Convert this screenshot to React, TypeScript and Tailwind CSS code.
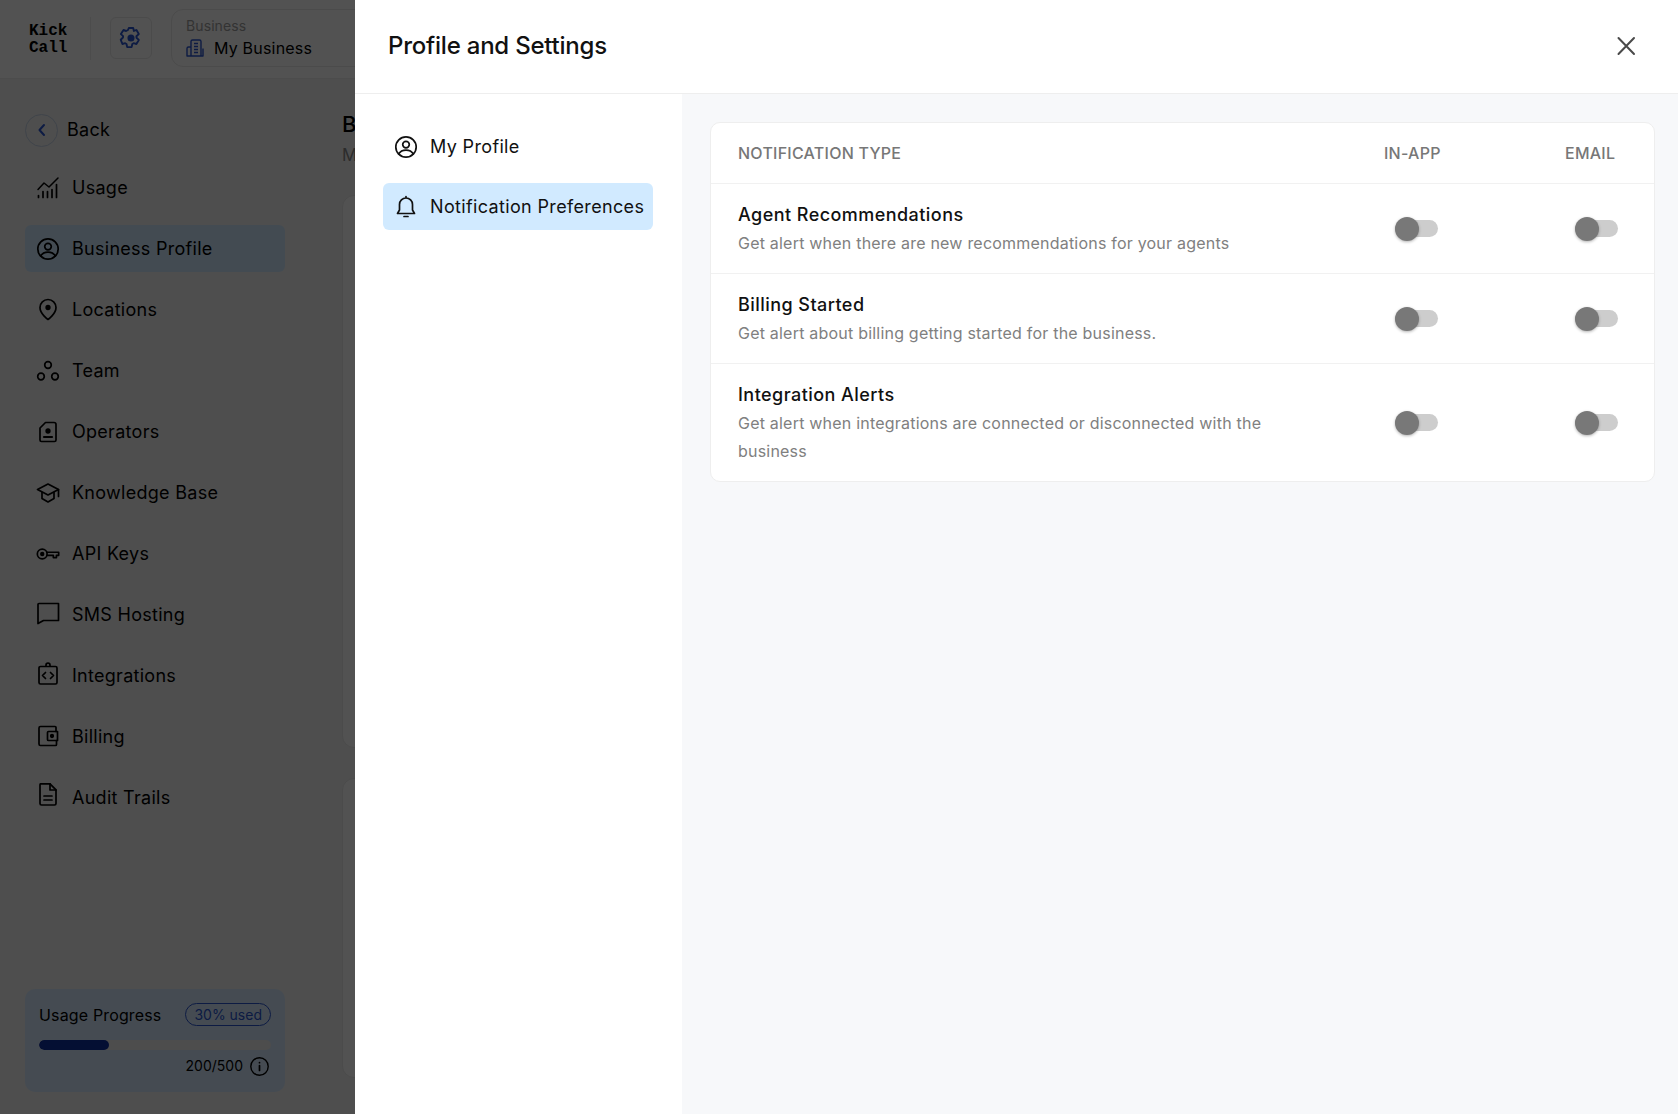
import React from "react";

const S = ({ children, size = 24, className = "" }: { children: React.ReactNode; size?: number; className?: string }) => (
  <svg width={size} height={size} viewBox="0 0 24 24" fill="none" stroke="currentColor" strokeWidth={1.7} strokeLinecap="round" strokeLinejoin="round" className={className}>
    {children}
  </svg>
);

const UserCircle = () => (
  <S>
    <circle cx="12" cy="12" r="10.2" />
    <circle cx="12" cy="9.6" r="3.3" />
    <path d="M4.6 19c1.6-2.6 4.3-3.9 7.4-3.9s5.8 1.3 7.4 3.9" />
  </S>
);

const items: { label: string; icon: React.ReactNode; active?: boolean }[] = [
  {
    label: "Usage",
    icon: (
      <S>
        <path d="M2 13.5 8 7l5 4 9-9" strokeWidth={1.5} />
        <path d="M2.5 21.5v-2M7 21.5v-6M11.5 21.5v-6M16 21.5v-8M20.5 21.5v-13" strokeWidth={1.7} />
      </S>
    ),
  },
  { label: "Business Profile", icon: <UserCircle />, active: true },
  {
    label: "Locations",
    icon: (
      <S>
        <path d="M12 21.5s-8-5.500-8-12a8 8 0 0 1 16 0c0 6.500-8 12-8 12Z" />
        <circle cx="12" cy="9.500" r="1.800" fill="currentColor" />
      </S>
    ),
  },
  {
    label: "Team",
    icon: (
      <S>
        <circle cx="12" cy="6" r="3.300" />
        <circle cx="5" cy="17.500" r="3.300" />
        <circle cx="19" cy="17.500" r="3.300" />
      </S>
    ),
  },
  {
    label: "Operators",
    icon: (
      <S>
        <path d="M9.500 2.500h8.500a2 2 0 0 1 2 2v15.500a1.500 1.500 0 0 1-1.500 1.500h-13A1.500 1.500 0 0 1 4 20V8l5.500-5.500Z" />
        <circle cx="12" cy="11" r="1.800" fill="currentColor" />
        <path d="M8 17h8" strokeWidth={2.200} />
      </S>
    ),
  },
  {
    label: "Knowledge Base",
    icon: (
      <S>
        <path d="m12 3 10.500 5.500L12 14 1.500 8.500 12 3Z" />
        <path d="M6 11.500v6l6 3.500 6-3.500v-6M22.500 8.500v7" />
      </S>
    ),
  },
  {
    label: "API Keys",
    icon: (
      <svg width="28" height="28" viewBox="0 0 27 27" fill="none" stroke="currentColor" strokeWidth="1.900" strokeLinecap="round" strokeLinejoin="round">
        <circle cx="7" cy="13.500" r="5.500" />
        <circle cx="7" cy="13.500" r="1.500" fill="currentColor" />
        <path d="M12.500 11.500H25.500v3.500h-2.500v2.500h-3.500V15H12.500" />
      </svg>
    ),
  },
  {
    label: "SMS Hosting",
    icon: (
      <S className="translate-y-[-1px]">
        <path d="M3 1.500h19.500v17H7.500L2 21.500V2.500a1 1 0 0 1 1-1Z" />
      </S>
    ),
  },
  {
    label: "Integrations",
    icon: (
      <S className="translate-y-[-2px]">
        <path d="M4.500 4.500h15A1.500 1.500 0 0 1 21 6v14.500a1.500 1.500 0 0 1-1.500 1.500h-15A1.500 1.500 0 0 1 3 20.500V6a1.500 1.500 0 0 1 1.500-1.500ZM10 4.500v-1.300a2 2 0 0 1 4 0v1.300" />
        <path d="m9.500 10.500-3 3 3 3M14.500 10.500l3 3-3 3" />
      </S>
    ),
  },
  {
    label: "Billing",
    icon: (
      <S className="translate-y-[-1px]">
        <path d="M20 7.500V3.500a1 1 0 0 0-1-1H4.500A1.500 1.500 0 0 0 3 4v16a1.500 1.500 0 0 0 1.500 1.500H19.500a1 1 0 0 0 1-1V16.500" />
        <path d="M12.500 7.500H21.500v9H12.500a1 1 0 0 1-1-1V8.500a1 1 0 0 1 1-1Z" />
        <circle cx="16" cy="12" r="1.300" fill="currentColor" />
      </S>
    ),
  },
  {
    label: "Audit Trails",
    icon: (
      <S className="translate-y-[-3px]">
        <path d="M5 .800h9l6 6V20.500A1.500 1.500 0 0 1 18.500 22h-13A1.500 1.500 0 0 1 4 20.500V1.800a1 1 0 0 1 1-1Z" />
        <path d="M14 .800V7h6M8 13h8M8 17h8" />
      </S>
    ),
  },
];

const Toggle = () => (
  <div className="relative h-[17px] w-[43px] rounded-full bg-[#cdcdcd]">
    <div className="absolute left-0 top-[-3.500px] size-[24px] rounded-full bg-[#787878] shadow-[0_1px_3px_rgba(0,0,0,0.3)]" />
  </div>
);

const rows = [
  { t: "Agent Recommendations", d: "Get alert when there are new recommendations for your agents" },
  { t: "Billing Started", d: "Get alert about billing getting started for the business." },
  { t: "Integration Alerts", d: "Get alert when integrations are connected or disconnected with the business" },
];

export default function App() {
  return (
    <div className="relative flex h-[1114px] w-full flex-col overflow-hidden bg-[#f2f2f2] font-['Inter','Liberation_Sans',sans-serif] text-[#000]">
      <header className="flex h-[79px] shrink-0 items-start border-b border-[#ececec] bg-white pl-[29px] pt-[9px]">
        <div className="mt-[14px] w-[61px] font-['Liberation_Mono',monospace] text-[16px] font-bold leading-[16.500px]">
          Kick
          <br />
          Call
        </div>
        <div className="mt-[8px] h-[43px] w-px bg-[#ececec]" />
        <div className="ml-[19px] mt-[8px] flex size-[42px] items-center justify-center rounded-[6px] border border-[#e8e8e8] text-[#2a55d0]">
          <svg width="24" height="24" viewBox="0 0 24 24" fill="none" stroke="currentColor" strokeWidth="1.900" strokeLinejoin="round">
            <path d="M9.800 2h4.400l.7 3 2.300-1 .4.200 2.200 3.700-.2.400-2.200 2 .1 1.400 2.300 2.200-2.400 4.100-2.800-.8-1.300.8-.7 3.100h-4.400l-.7-3.100-1.300-.8-2.800.8L1.700 13.700 4 11.500l.1-1.400-2.200-2 2.600-4.100 2.600 1 1.900-1Z" />
            <circle cx="12" cy="12" r="2.600" fill="currentColor" />
          </svg>
        </div>
        <div className="ml-[19px] flex h-[58px] w-[300px] flex-col justify-center rounded-[12px] border border-[#e8e8e8] pl-[14px]">
          <span className="text-[14px] leading-[18px] tracking-[0.1px] text-[#a0a0a0]">Business</span>
          <div className="mt-[2px] flex items-center gap-[10px]">
            <svg width="18" height="18" viewBox="0 0 18 18" fill="none" stroke="#2a55d0" strokeWidth="1.400" strokeLinejoin="round">
              <path d="M5 17V2.500A1.500 1.500 0 0 1 6.500 1h7A1.500 1.500 0 0 1 15 2.500V17ZM5 8H2.500A1.500 1.500 0 0 0 1 9.500V17h16V9.500" />
              <path d="M8 4.500h4M8 7.500h4M8 10.500h4M8 13.500h4" />
            </svg>
            <span className="text-[16px] leading-[22px] tracking-[0.2px]">My Business</span>
          </div>
        </div>
      </header>

      <div className="flex min-h-0 flex-1">
        <aside className="flex w-[342px] shrink-0 flex-col justify-between pb-[22px] pl-[25px] pr-[57px] pt-[34px]">
          <div>
            <div className="flex h-[34px] items-center gap-[9px]">
              <div className="flex size-[33px] items-center justify-center rounded-full border border-[#c5d3e6] text-[#2a55d0]">
                <svg width="16" height="16" viewBox="0 0 16 16" fill="none" stroke="currentColor" strokeWidth="2" strokeLinecap="round" strokeLinejoin="round">
                  <path d="M10 3 5.500 8l4.500 5" />
                </svg>
              </div>
              <span className="text-[18px] leading-[24px] tracking-[0.28px]">Back</span>
            </div>
            <nav className="mt-[17px] flex flex-col gap-[14px]">
              {items.map((it) => (
                <div key={it.label} className={`flex h-[47px] items-center rounded-[6px] pl-[11px] ${it.active ? "bg-[#d1eaff]" : ""}`}>
                  <span className="flex w-[24px] shrink-0 items-center justify-center">{it.icon}</span>
                  <span className="ml-[12px] text-[18px] leading-[24px] tracking-[0.28px]">{it.label}</span>
                </div>
              ))}
            </nav>
          </div>
          <div className="h-[103px] rounded-[10px] bg-[#d6eaff] px-[14px] pt-[14px]">
            <div className="flex items-center justify-between">
              <span className="text-[16px] leading-[22px] tracking-[0.15px]">Usage Progress</span>
              <span className="rounded-full border border-[#2a55d0] px-[8px] text-[14px] leading-[21px] text-[#2a55d0]">30% used</span>
            </div>
            <div className="mt-[14px] h-[10px] overflow-hidden rounded-full bg-[#eeeeee]">
              <div className="h-full w-[30%] rounded-full bg-[#0d2f9e]" />
            </div>
            <div className="mt-[6px] flex items-center justify-end gap-[7px] pr-[2px]">
              <span className="text-[14px] leading-[20px]">200/500</span>
              <svg width="19" height="19" viewBox="0 0 19 19" fill="none" stroke="currentColor" strokeWidth="1.400" strokeLinecap="round">
                <circle cx="9.500" cy="9.500" r="8.700" />
                <path d="M9.500 8.500v5M9.500 5.500v.2" strokeWidth="1.700" />
              </svg>
            </div>
          </div>
        </aside>
        <main className="min-w-0 flex-1 pt-[30px]">
          <h1 className="w-[20px] overflow-hidden whitespace-nowrap text-[22px] font-medium leading-[30px]">Business Profile</h1>
          <p className="mt-[4px] w-[20px] overflow-hidden whitespace-nowrap text-[17px] leading-[24px] text-[#888]">Manage your business</p>
          <div className="mt-[28px] h-[553px] rounded-[12px] border border-[#e8e8e8] bg-white" />
          <div className="mt-[30px] h-[300px] rounded-[12px] border border-[#e8e8e8] bg-white" />
        </main>
      </div>

      <div className="absolute inset-0 bg-black/[0.68]" />

      <div className="absolute bottom-0 right-0 top-0 flex w-[1323px] flex-col bg-white">
        <div className="flex h-[94px] shrink-0 items-center justify-between border-b border-[#eeeeee] pb-[2px] pl-[33px] pr-[41px]">
          <h2 className="text-[24px] font-medium leading-[32px] tracking-[-0.22px] text-[#111]">Profile and Settings</h2>
          <svg width="22" height="22" viewBox="0 0 22 22" fill="none" stroke="#4a4a4a" strokeWidth="2" strokeLinecap="round">
            <path d="m3.500 3 15.500 16M19 3 3.500 19" />
          </svg>
        </div>
        <div className="flex min-h-0 flex-1">
          <div className="w-[327px] shrink-0 pl-[28px] pr-[29px] pt-[29px]">
            <div className="flex h-[47px] items-center pl-[11px] text-[#111]">
              <UserCircle />
              <span className="ml-[12px] text-[18px] leading-[24px] tracking-[0.35px]">My Profile</span>
            </div>
            <div className="mt-[13px] flex h-[47px] items-center rounded-[6px] bg-[#d1eaff] pl-[11px] text-[#111]">
              <S>
                <path d="M12 3a6.500 6.500 0 0 0-6.500 6.500V15l-2 3.500h17l-2-3.500V9.500A6.500 6.500 0 0 0 12 3ZM12 3V1.500M10 21.500h4" />
              </S>
              <span className="ml-[12px] whitespace-nowrap text-[18px] leading-[24px] tracking-[0.35px]">Notification Preferences</span>
            </div>
          </div>
          <div className="flex-1 bg-[#f7f8fa] pl-[28px] pr-[23px] pt-[28px]">
            <div className="overflow-hidden rounded-[10px] border border-[#eeeeee] bg-white">
              <div className="grid h-[60px] grid-cols-[1fr_181px_108px] items-center text-[16px] font-medium tracking-[0.25px] text-[#777]">
                <span className="pl-[27px]">NOTIFICATION TYPE</span>
                <span className="pl-[19px]">IN-APP</span>
                <span className="pl-[19px]">EMAIL</span>
              </div>
              {rows.map((r) => (
                <div key={r.t} className="grid grid-cols-[1fr_181px_108px] items-center border-t border-[#f1f1f1]">
                  <div className="pb-[16px] pl-[27px] pr-[90px] pt-[17px]">
                    <div className="text-[18px] font-medium leading-[28px] tracking-[0.45px] text-[#111]">{r.t}</div>
                    <div className="text-[16px] leading-[28px] tracking-[0.21px] text-[#808080]">{r.d}</div>
                  </div>
                  <div className="pl-[30px]">
                    <Toggle />
                  </div>
                  <div className="pl-[29px]">
                    <Toggle />
                  </div>
                </div>
              ))}
            </div>
          </div>
        </div>
      </div>
    </div>
  );
}
